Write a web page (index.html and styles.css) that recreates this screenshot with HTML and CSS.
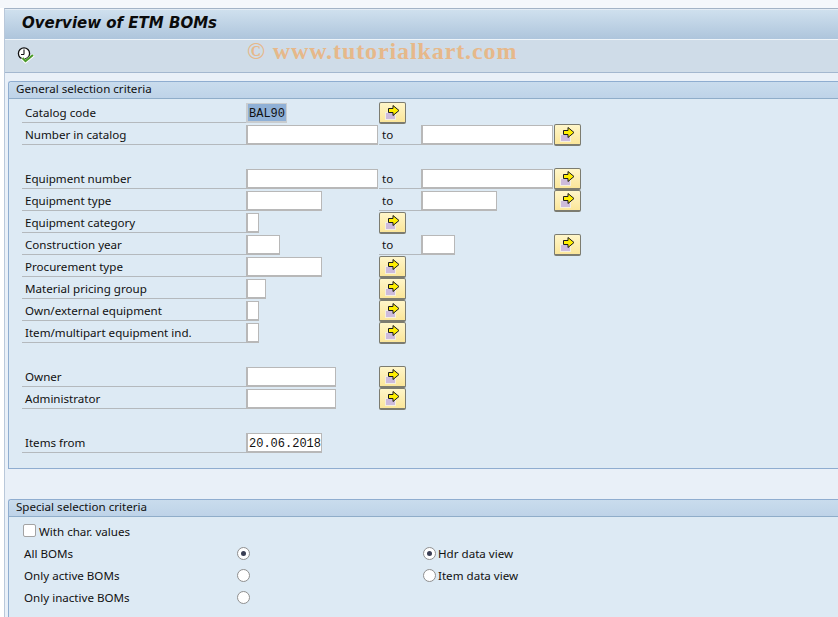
FILE: index.html
```html
<!DOCTYPE html>
<html lang="en">
<head>
<meta charset="utf-8">
<title>Overview of ETM BOMs</title>
<link rel="stylesheet" href="styles.css">
</head>
<body>
<svg class="defs" width="0" height="0" aria-hidden="true">
  <symbol id="multi" viewBox="0 0 20 16">
    <rect x="2.5" y="7.5" width="10" height="7" fill="#cdbbdc" stroke="#f4efe0" stroke-width="1"/>
    <path d="M5.5 3.5H10V0.5L16 5.5L10 10.5V7.5H5.5Z" fill="#ffee00" stroke="#1c1c1c" stroke-width="1"/>
  </symbol>
</svg>
<div class="top-strip"></div>
<main class="window">
  <header class="title-bar"><h1>Overview of ETM BOMs</h1></header>
  <div class="toolbar">
    <svg class="exec" width="18" height="18" viewBox="0 0 18 18" aria-hidden="true">
      <circle cx="7" cy="6.5" r="5.6" fill="#fff" stroke="#111" stroke-width="1.3"/>
      <path d="M7 2.5V7.5M7 7.5H4" fill="none" stroke="#111" stroke-width="1.1"/>
      <path d="M5 11L8.5 14.5L16.5 8" fill="none" stroke="#fff" stroke-width="3.4"/>
      <path d="M5.5 11L8.5 14L16 8" fill="none" stroke="#4a9a2a" stroke-width="2.2"/>
    </svg>
    <span class="watermark">© www.tutorialkart.com</span>
  </div>

  <section class="panel general">
    <h2 class="panel-head">General selection criteria</h2>
    <div class="form">
      <div class="row"><span class="label">Catalog code</span><span class="f1"><span class="field w41 disp">BAL90</span></span><button class="mbtn"><svg width="20" height="16"><use href="#multi"/></svg></button></div>
      <div class="row"><span class="label">Number in catalog</span><span class="f1"><span class="field w132"></span></span><span class="to">to</span><span class="f2"><span class="field w132"></span></span><button class="mbtn"><svg width="20" height="16"><use href="#multi"/></svg></button></div>
      <div class="row"></div>
      <div class="row"><span class="label">Equipment number</span><span class="f1"><span class="field w132"></span></span><span class="to">to</span><span class="f2"><span class="field w132"></span></span><button class="mbtn"><svg width="20" height="16"><use href="#multi"/></svg></button></div>
      <div class="row"><span class="label">Equipment type</span><span class="f1"><span class="field w76"></span></span><span class="to">to</span><span class="f2"><span class="field w76"></span></span><button class="mbtn"><svg width="20" height="16"><use href="#multi"/></svg></button></div>
      <div class="row"><span class="label">Equipment category</span><span class="f1"><span class="field w13"></span></span><button class="mbtn"><svg width="20" height="16"><use href="#multi"/></svg></button></div>
      <div class="row"><span class="label">Construction year</span><span class="f1"><span class="field w34"></span></span><span class="to">to</span><span class="f2"><span class="field w34"></span></span><button class="mbtn"><svg width="20" height="16"><use href="#multi"/></svg></button></div>
      <div class="row"><span class="label">Procurement type</span><span class="f1"><span class="field w76"></span></span><button class="mbtn"><svg width="20" height="16"><use href="#multi"/></svg></button></div>
      <div class="row"><span class="label">Material pricing group</span><span class="f1"><span class="field w20"></span></span><button class="mbtn"><svg width="20" height="16"><use href="#multi"/></svg></button></div>
      <div class="row"><span class="label">Own/external equipment</span><span class="f1"><span class="field w13"></span></span><button class="mbtn"><svg width="20" height="16"><use href="#multi"/></svg></button></div>
      <div class="row"><span class="label">Item/multipart equipment ind.</span><span class="f1"><span class="field w13"></span></span><button class="mbtn"><svg width="20" height="16"><use href="#multi"/></svg></button></div>
      <div class="row"></div>
      <div class="row"><span class="label">Owner</span><span class="f1"><span class="field w90"></span></span><button class="mbtn"><svg width="20" height="16"><use href="#multi"/></svg></button></div>
      <div class="row"><span class="label">Administrator</span><span class="f1"><span class="field w90"></span></span><button class="mbtn"><svg width="20" height="16"><use href="#multi"/></svg></button></div>
      <div class="row"></div>
      <div class="row"><span class="label">Items from</span><span class="f1"><span class="field w76">20.06.2018</span></span></div>
    </div>
  </section>

  <section class="panel special">
    <h2 class="panel-head">Special selection criteria</h2>
    <div class="options">
      <div class="opt"><span class="check"></span><span class="check-text">With char. values</span></div>
      <div class="opt"><span class="opt-label">All BOMs</span><span class="radio on"></span><span class="radio second on"></span><span class="radio-text">Hdr data view</span></div>
      <div class="opt"><span class="opt-label">Only active BOMs</span><span class="radio"></span><span class="radio second"></span><span class="radio-text">Item data view</span></div>
      <div class="opt"><span class="opt-label">Only inactive BOMs</span><span class="radio"></span></div>
    </div>
  </section>
</main>
</body>
</html>
```

FILE: styles.css
```css
* { box-sizing: border-box; }
html, body { margin: 0; padding: 0; height: 100%; overflow: hidden; }
body {
  background: #fff;
  font-family: "Noto Sans", "DejaVu Sans", sans-serif;
  font-size: 11.6px;
  color: #111;
}
.defs { position: absolute; }
.top-strip { height: 8px; background: #f4f7fb; }
.window {
  position: relative;
  margin-left: 4px;
  height: 609px;
  border-top: 1px solid #a3b3c6;
  border-left: 1px solid #b9c8da;
  background: #e9f0f8;
}
.title-bar {
  height: 31px;
  display: flex;
  align-items: center;
  padding: 0 0 4px 17px;
  border-top: 1px solid #e3ecf5;
  background: linear-gradient(#cfe0ee, #aec5dc);
  border-bottom: 1px solid #eef4f9;
}
.title-bar h1 {
  margin: 0;
  font: italic bold 15px "DejaVu Sans", sans-serif;
  color: #0b0b0b;
}
.toolbar {
  height: 33px;
  display: flex;
  align-items: center;
  padding-left: 12px;
  background: #cfdce8;
  border-bottom: 1px solid #a3b7cf;
}
.watermark {
  position: absolute;
  left: 242px;
  top: 29px;
  font: bold 24px "Liberation Serif", serif;
  letter-spacing: 0.9px;
  color: #e6b88a;
}
.panel {
  margin-left: 3px;
  background: #ddeaf4;
  border: 1px solid #8fadd0;
  border-right: 0;
  border-top-left-radius: 3px;
}
.general { margin-top: 8px; height: 388px; }
.special { margin-top: 30px; height: 130px; border-bottom: 0; }
.panel-head {
  margin: 0;
  height: 17px;
  padding-left: 7px;
  font-size: 11.6px;
  font-weight: 400;
  line-height: 14px;
  color: #111;
  background: linear-gradient(#c9dced, #bed3e8);
  border-bottom: 1px solid #8fadc9;
  border-top-left-radius: 3px;
}
.general .form { padding: 3px 0 0 13px; }
.row {
  display: flex;
  align-items: center;
  height: 22px;
}
.label {
  width: 224px;
  height: 21px;
  padding-left: 3px;
  line-height: 22px;
  border-bottom: 1px solid #b4b9bd;
  align-self: flex-start;
}
.f1, .f2 { width: 133px; display: flex; }
.to { width: 42px; padding-left: 3px; height: 21px; line-height: 22px; border-bottom: 1px solid #b4b9bd; align-self: flex-start; }
.field {
  height: 20px;
  background: #fff;
  border: 2px solid #b8b8b8;
  border-width: 1px 1px 2px 2px;
  font: 12px/20px "Liberation Mono", monospace;
  padding-left: 1px;
  color: #111;
  display: block;
  overflow: hidden;
}
.disp { background: #8fb0d6; border-color: #c9cdd0; }
.w132 { width: 132px; }
.w90 { width: 90px; }
.w76 { width: 76px; }
.w41 { width: 41px; }
.w34 { width: 34px; }
.w20 { width: 20px; }
.w13 { width: 13px; }
.mbtn {
  width: 27px;
  height: 22px;
  padding: 0;
  display: flex;
  align-items: center;
  justify-content: center;
  background: linear-gradient(#fff6c9, #fbe69a);
  border: 1px solid #7c7c70;
  border-bottom-width: 2px;
  border-radius: 2px;
}
.options { padding: 3px 0 0 15px; }
.opt { display: flex; align-items: center; height: 22px; position: relative; }
.opt-label { width: 213px; }
.check { width: 13px; height: 13px; background: #fff; border: 1px solid #a3a3a3; border-radius: 2px; margin-left: -1px; margin-top: -1px; }
.check-text { margin-left: 3px; }
.radio {
  width: 13px; height: 13px;
  border-radius: 50%;
  border: 1px solid #8f8f8f;
  background: #fff;
  display: flex;
  align-items: center;
  justify-content: center;
}
.radio.on::after { content: ""; width: 5px; height: 5px; border-radius: 50%; background: #3a3f55; }
.second { margin-left: 173px; }
.radio-text { margin-left: 2px; }
```
